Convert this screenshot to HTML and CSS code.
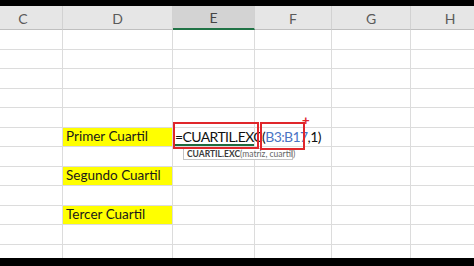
FILE: index.html
```html
<!DOCTYPE html>
<html lang="es">
<head>
<meta charset="utf-8">
<title>Cuartil</title>
<link rel="stylesheet" href="styles.css">
</head>
<body>
<div class="screen">
  <div class="sheet">
    <div class="hd">C</div><div class="hd">D</div><div class="hd sel">E</div><div class="hd">F</div><div class="hd">G</div><div class="hd">H</div>

    <div class="c"></div><div class="c"></div><div class="c"></div><div class="c"></div><div class="c"></div><div class="c"></div>
    <div class="c"></div><div class="c"></div><div class="c"></div><div class="c"></div><div class="c"></div><div class="c"></div>
    <div class="c"></div><div class="c"></div><div class="c"></div><div class="c"></div><div class="c"></div><div class="c"></div>
    <div class="c"></div><div class="c"></div><div class="c"></div><div class="c"></div><div class="c"></div><div class="c"></div>
    <div class="c"></div><div class="c"></div><div class="c"></div><div class="c"></div><div class="c"></div><div class="c"></div>

    <div class="c"></div><div class="c label">Primer Cuartil</div><div class="c active"><span class="formula">=CUARTIL.EXC(<span class="ref">B3:B17</span>,1)</span></div><div class="c"></div><div class="c"></div><div class="c"></div>

    <div class="c"></div><div class="c"></div><div class="c"></div><div class="c"></div><div class="c"></div><div class="c"></div>

    <div class="c"></div><div class="c label">Segundo Cuartil</div><div class="c"></div><div class="c"></div><div class="c"></div><div class="c"></div>

    <div class="c"></div><div class="c"></div><div class="c"></div><div class="c"></div><div class="c"></div><div class="c"></div>

    <div class="c"></div><div class="c label">Tercer Cuartil</div><div class="c"></div><div class="c"></div><div class="c"></div><div class="c"></div>

    <div class="c"></div><div class="c"></div><div class="c"></div><div class="c"></div><div class="c"></div><div class="c"></div>
    <div class="c"></div><div class="c"></div><div class="c"></div><div class="c"></div><div class="c"></div><div class="c"></div>
  </div>

  <div class="tip"><b>CUARTIL.EXC</b>(matriz, cuartil)</div>
  <div class="mark mark-fn"></div>
  <div class="mark mark-ref"></div>
  <div class="plus">+</div>
</div>
</body>
</html>
```

FILE: styles.css
```css
* { box-sizing: border-box; }
html, body { margin: 0; padding: 0; background: #000; }

.screen {
  position: relative;
  width: 474px;
  height: 266px;
  overflow: hidden;
  background: #000;
  font-family: Lato, "Open Sans", sans-serif;
}

.sheet {
  margin: 6px 0 0 -16px;
  width: 506px;
  height: 252px;
  overflow: hidden;
  background: #fff;
  display: grid;
  grid-template-columns: 79px 110px 82px 77px 79px 79px;
  grid-template-rows: 24px repeat(12, 19.5px);
}

.hd {
  background: #e6e6e6;
  border-right: 1px solid #d2d2d2;
  border-bottom: 1px solid #bfbfbf;
  color: #5a5a5a;
  font-size: 14px;
  display: flex;
  align-items: center;
  justify-content: center;
  padding-top: 1px;
}
.hd.sel {
  background: #d3d3d3;
  border-bottom: 2px solid #217346;
  color: #444;
}

.c {
  border-right: 1px solid #dcdcdc;
  border-bottom: 1px solid #dcdcdc;
  display: flex;
  align-items: flex-end;
  white-space: nowrap;
  min-width: 0;
}

.label {
  background: #ffff00;
  color: #1a1a1a;
  font-size: 13.5px;
  padding: 0 0 2px 3px;
}

.active {
  overflow: visible;
  box-shadow: inset 1px 0 0 #1d6b3f, inset 0 -2px 0 #1d6b3f;
  padding: 0 0 1px 2px;
}

.formula {
  color: #111;
  font-size: 14px;
  letter-spacing: -0.6px;
  line-height: 17px;
}
.formula .ref { color: #4a74c4; }

.tip {
  position: absolute;
  left: 183px;
  top: 148px;
  width: 110px;
  height: 12px;
  background: #fff;
  border: 1px solid #c4c4c4;
  font-size: 8.5px;
  line-height: 10px;
  color: #666;
  padding-left: 3px;
  white-space: nowrap;
}
.tip b { color: #3a3a3a; }

.mark {
  position: absolute;
  border: 2px solid #e0262b;
}
.mark-fn { left: 173px; top: 122px; width: 86px; height: 27px; }
.mark-ref { left: 260px; top: 122px; width: 45px; height: 28px; }

.plus {
  position: absolute;
  left: 302px;
  top: 114px;
  color: #e0262b;
  font: bold 13px "Liberation Sans", sans-serif;
  line-height: 13px;
}
```
